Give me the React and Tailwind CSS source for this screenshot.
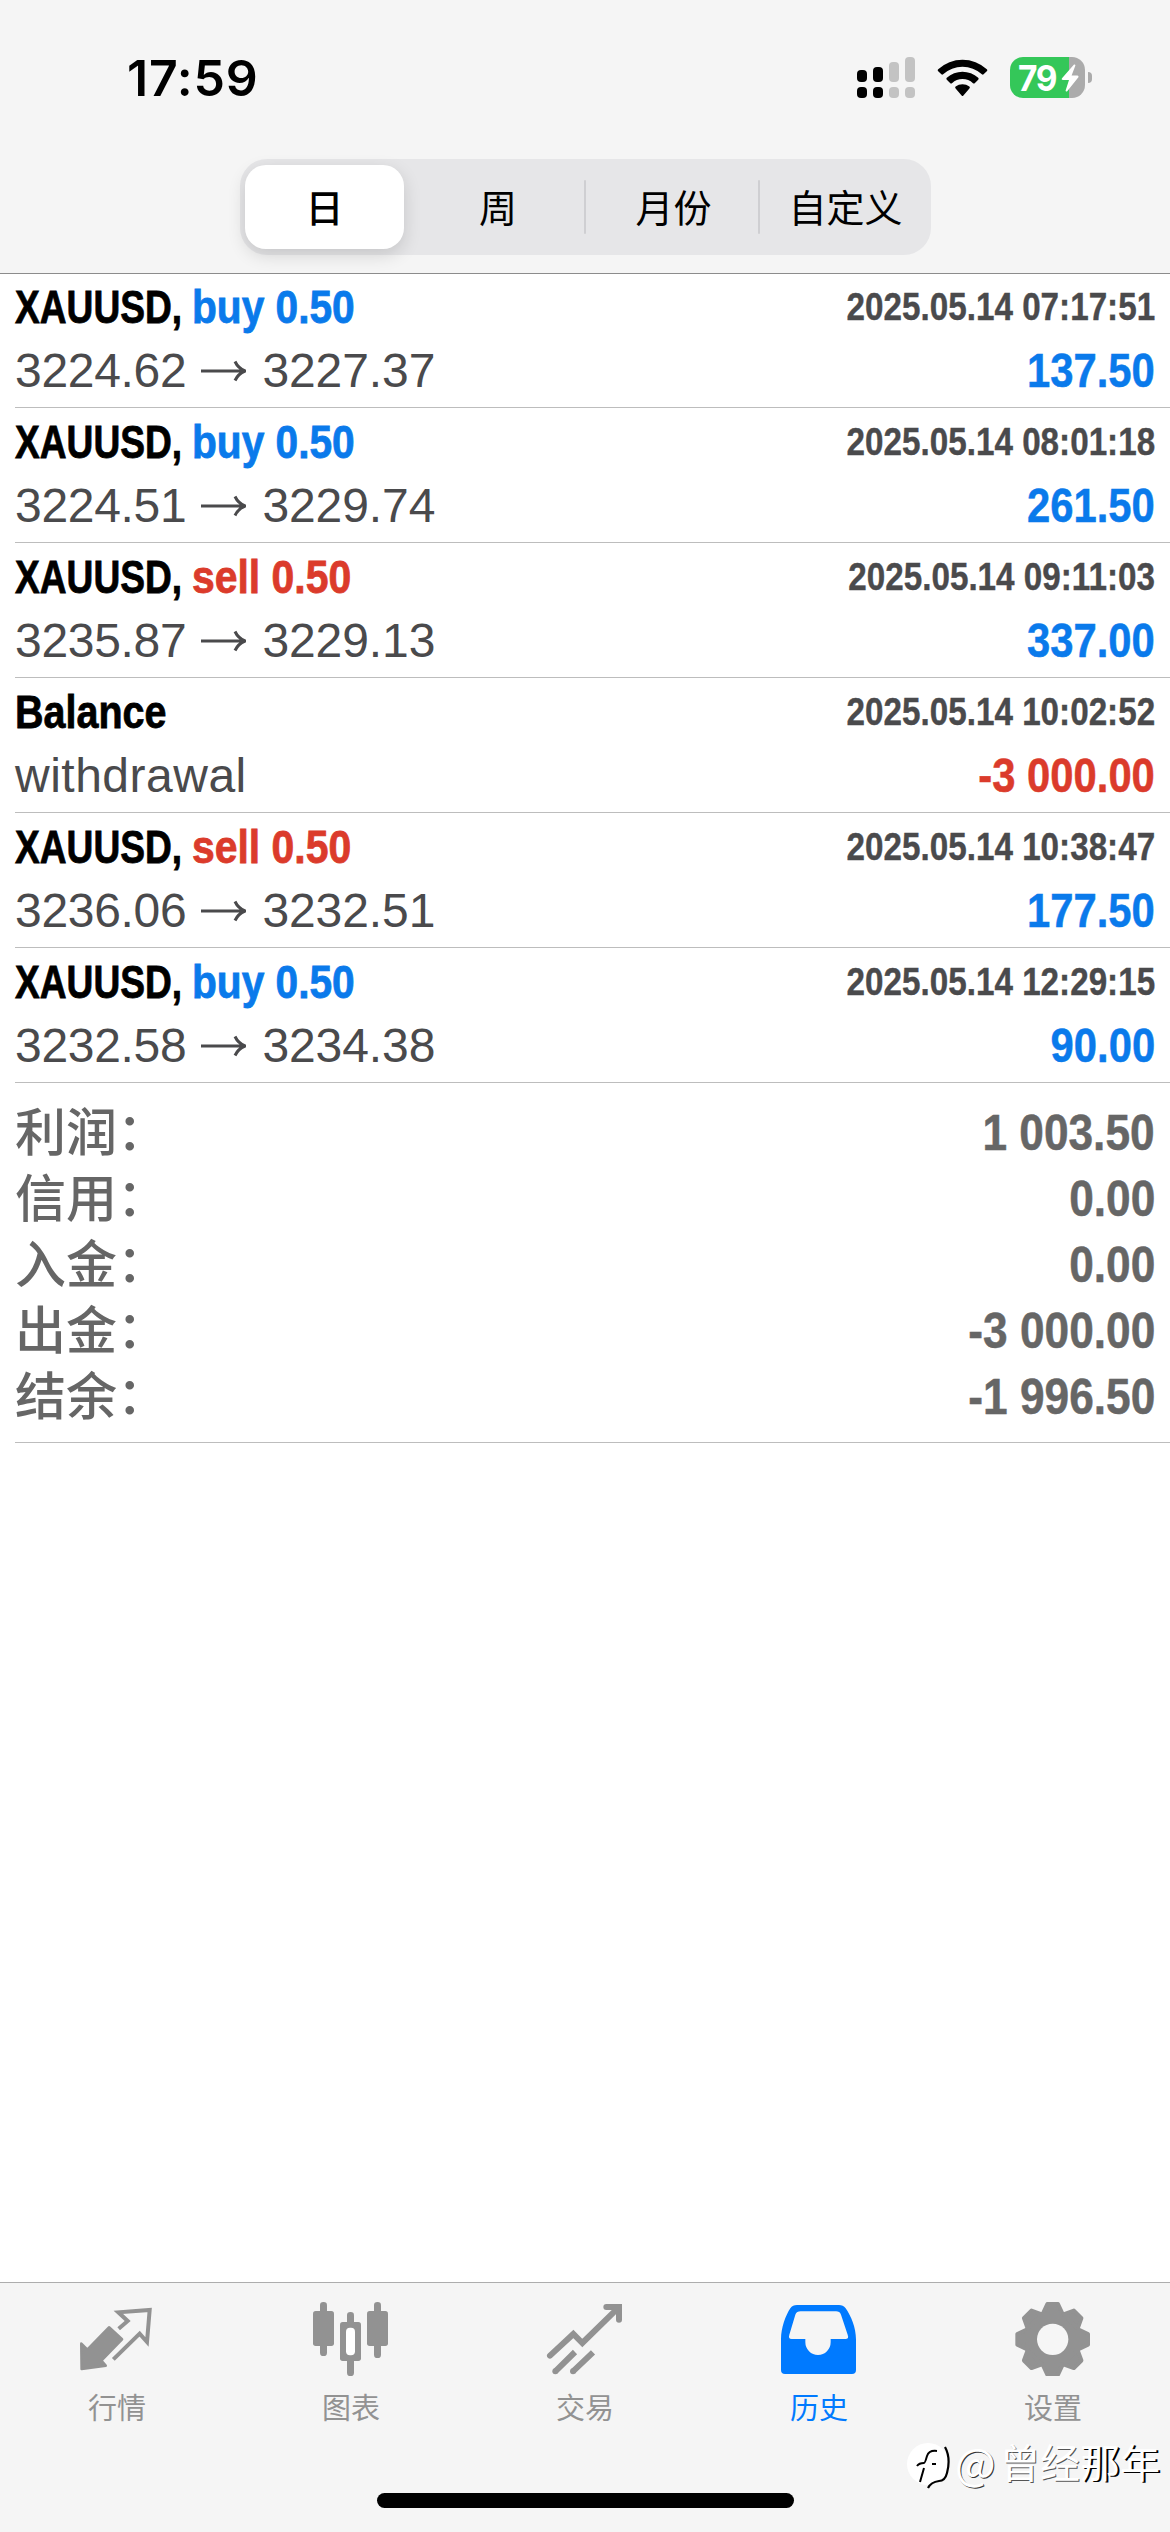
import clsx from 'clsx';

const deals = [
  { symbol: 'XAUUSD', side: 'buy', volume: '0.50', open: '3224.62', close: '3227.37', time: '2025.05.14 07:17:51', profit: '137.50' },
  { symbol: 'XAUUSD', side: 'buy', volume: '0.50', open: '3224.51', close: '3229.74', time: '2025.05.14 08:01:18', profit: '261.50' },
  { symbol: 'XAUUSD', side: 'sell', volume: '0.50', open: '3235.87', close: '3229.13', time: '2025.05.14 09:11:03', profit: '337.00' },
  { title: 'Balance', note: 'withdrawal', time: '2025.05.14 10:02:52', profit: '-3 000.00' },
  { symbol: 'XAUUSD', side: 'sell', volume: '0.50', open: '3236.06', close: '3232.51', time: '2025.05.14 10:38:47', profit: '177.50' },
  { symbol: 'XAUUSD', side: 'buy', volume: '0.50', open: '3232.58', close: '3234.38', time: '2025.05.14 12:29:15', profit: '90.00' },
];

const summary = [
  { label: '利润', value: '1 003.50' },
  { label: '信用', value: '0.00' },
  { label: '入金', value: '0.00' },
  { label: '出金', value: '-3 000.00' },
  { label: '结余', value: '-1 996.50' },
];

const periods = ['日', '周', '月份', '自定义'];

const StatusBar = () => (
  <div className="flex h-[146px] items-start justify-between pt-[50px] pl-[127px] pr-[78px]">
    <span className="font-[Inter,sans-serif] text-[50px] leading-[56px] font-semibold tracking-[0.8px] text-black">
      17:59
    </span>
    <div className="flex items-start pt-[7px]">
      <svg className="h-[42px] w-[60px]" viewBox="0 0 60 42">
        <g fill="#000">
          <rect x="0" y="13" width="10" height="12" rx="4" />
          <rect x="16" y="10" width="10" height="15" rx="4" />
          <rect x="0" y="30" width="10" height="11" rx="4" />
          <rect x="16" y="30" width="10" height="11" rx="4" />
        </g>
        <g fill="#c3c3c3">
          <rect x="32" y="5" width="10" height="20" rx="4" />
          <rect x="48" y="0" width="10" height="25" rx="4" />
          <rect x="32" y="30" width="10" height="11" rx="4" />
          <rect x="48" y="30" width="10" height="11" rx="4" />
        </g>
      </svg>
      <svg className="ml-5 h-[42px] w-[52px]" viewBox="0 0 52 42">
        <path d="M1.2 12.2A36 36 0 0 1 49.8 12.2Q50.8 13.2 49.8 14.2L46.6 17.3Q45.8 18.1 44.9 17.3A29 29 0 0 0 6.1 17.3Q5.2 18.1 4.4 17.3L1.2 14.2Q.2 13.2 1.2 12.2Z" />
        <path d="M9.8 20.8A23.5 23.5 0 0 1 41.2 20.8Q42.2 21.8 41.2 22.8L37.7 26.2Q36.9 27 36 26.2A15.5 15.5 0 0 0 15 26.2Q14.1 27 13.3 26.2L9.8 22.8Q8.8 21.8 9.8 20.8Z" />
        <path d="M18.6 29.6A11 11 0 0 1 32.4 29.6Q33.4 30.6 32.4 31.6L26.4 38.5Q25.5 39.5 24.6 38.5L18.6 31.6Q17.6 30.6 18.6 29.6Z" />
      </svg>
      <div className="ml-[21px] flex items-center">
        <div className="flex h-[41px] w-[75px] items-center rounded-[13px] bg-linear-to-r from-[#34c759] from-79% to-[#ababab] to-79% pl-2">
          <span className="w-[43px] origin-left scale-x-[0.93] font-[Inter,sans-serif] text-[36px] leading-none font-bold tracking-[-1.5px] text-white">
            79
          </span>
          <svg className="h-7 w-[18px]" viewBox="0 0 18 28" fill="#fff">
            <path d="M13 .5 1 14.3Q0 16 2 16H8L4.6 26.4Q4.6 28 6.2 27.2L17.4 13.2Q18 11.5 16.4 11.4H10.6L14.4 1.6Q14.4 0 13 .5Z" />
          </svg>
        </div>
        <div className="ml-[3px] h-[11px] w-1 rounded-r-full bg-[#ababab]" />
      </div>
    </div>
  </div>
);

const PeriodPicker = () => (
  <div className="mt-[13px] ml-[240px] grid h-24 w-[691px] grid-cols-[172px_174px_174px_171px] rounded-[27px] bg-[#e6e6e8] font-['Noto_Sans_CJK_SC',sans-serif] text-[38px] text-black">
    {periods.map((period, i) => (
      <div key={period} className="flex items-center">
        <div
          className={clsx(
            'flex h-[84px] flex-1 items-center justify-center pb-[3px] leading-none',
            i === 0 && 'ml-[5px] mr-2 rounded-[21px] bg-white font-medium shadow-[0_6px_18px_rgba(0,0,0,0.14)]',
            i === 2 && 'pl-[3px]'
          )}
        >
          {period}
        </div>
        {(i === 1 || i === 2) && <div className="h-[54px] w-[2px] rounded bg-[#cfcfd2]" />}
      </div>
    ))}
  </div>
);

const Arrow = () => (
  <svg className="ml-[15px] mr-4 h-[22px] w-[45px]" viewBox="0 0 45 22" fill="none" stroke="#4a4a4c" strokeWidth="3">
    <path d="M0 11H43M34 1.5Q37 8 44 11Q37 14 34 20.5" />
  </svg>
);

const DealRow = ({ deal }) => (
  <div className="h-[135px] border-b border-[#bdbdbd] pt-[2px] pr-[15px] text-[48px] leading-[64px] text-[#4a4a4c]">
    <div className="flex h-16 justify-between font-bold">
      <div className="flex text-[47px] [-webkit-text-stroke:0.8px]">
        {deal.symbol ? (
          <>
            <span className="w-[177px] origin-left scale-x-[0.79] whitespace-nowrap text-black">{deal.symbol},</span>
            <span
              className={clsx(
                'origin-left whitespace-nowrap',
                deal.side === 'buy' ? 'scale-x-[0.865] text-[#0a7aeb]' : 'scale-x-[0.87] text-[#db3b2b]'
              )}
            >
              {deal.side} {deal.volume}
            </span>
          </>
        ) : (
          <span className="origin-left scale-x-[0.84] text-black">{deal.title}</span>
        )}
      </div>
      <span className="origin-right scale-x-[0.852] text-[39px] whitespace-nowrap [-webkit-text-stroke:0.4px]">
        {deal.time}
      </span>
    </div>
    <div className="flex h-16 justify-between">
      <div className="flex items-center">
        {deal.note ? (
          <span className="tracking-[0.5px]">{deal.note}</span>
        ) : (
          <>
            <span className="tracking-[-0.3px]">{deal.open}</span>
            <Arrow />
            <span className="tracking-[-0.1px]">{deal.close}</span>
          </>
        )}
      </div>
      <span
        className={clsx(
          'origin-right scale-x-[0.87] font-bold whitespace-nowrap [-webkit-text-stroke:0.5px]',
          deal.profit.startsWith('-') ? 'text-[#db3b2b]' : 'text-[#0a7aeb]'
        )}
      >
        {deal.profit}
      </span>
    </div>
  </div>
);

const Summary = () => (
  <div className="h-[360px] border-b border-[#bdbdbd] pt-[17px] pr-[15px] leading-[66px] text-[#666]">
    {summary.map(({ label, value }) => (
      <div key={label} className="flex h-[66px] justify-between">
        <span className="-mt-1 flex font-['Noto_Sans_CJK_SC',sans-serif] text-[51px] font-medium">
          {label}
          <span className="-mt-px">：</span>
        </span>
        <span className="origin-right scale-x-[0.885] text-[50px] font-bold whitespace-nowrap [-webkit-text-stroke:0.5px]">
          {value}
        </span>
      </div>
    ))}
  </div>
);

const QuotesIcon = () => (
  <>
    <path
      d="M13 143 31 161 96 94 135 130 73 194 86 209 14 219Z"
      fill="currentColor"
      stroke="currentColor"
      strokeWidth="8"
      strokeLinejoin="round"
    />
    <path d="M125 98 152 75 124 49 218 42 210 138 188 113 109 190" fill="none" stroke="currentColor" strokeWidth="12" />
  </>
);

const ChartIcon = () => (
  <g fill="currentColor">
    <rect x="6" y="45" width="63" height="105" rx="8" />
    <rect x="27" y="18" width="21" height="162" rx="10" />
    <rect x="87" y="78" width="63" height="117" rx="8" />
    <rect x="108" y="48" width="21" height="192" rx="10" />
    <rect x="105" y="95" width="27" height="83" rx="12" fill="#fff" />
    <rect x="168" y="45" width="63" height="105" rx="8" />
    <rect x="189" y="18" width="21" height="168" rx="10" />
  </g>
);

const TradeIcon = () => (
  <g fill="none" stroke="currentColor" strokeWidth="18">
    <path d="M15 179 85 114 112 141 218 37M184 33H222V71" strokeLinecap="round" />
    <path d="M31 226 90 168M84 226 144 169" />
    <circle cx="31" cy="226" r="9" fill="currentColor" stroke="none" />
    <circle cx="84" cy="226" r="9" fill="currentColor" stroke="none" />
  </g>
);

const HistoryIcon = () => (
  <path
    fill="currentColor"
    fillRule="evenodd"
    d="M6 222V130C6 95 20 58 34 37Q41 27 54 27H180Q192 27 200 37C216 60 231 95 231 130V222Q231 234 219 234H18Q6 234 6 222ZM65 46Q53 46 49 56L31 116Q27 129 38 129H79V138A38 39 0 0 0 155 138V129H199Q211 129 206 116L186 56Q182 46 171 46Z"
  />
);

const SettingsIcon = () => (
  <>
    <g fill="currentColor" stroke="currentColor" strokeWidth="12" strokeLinejoin="round">
      <circle cx="119" cy="130" r="81" />
      {[0, 45, 90, 135, 180, 225, 270, 315].map((angle) => (
        <path key={angle} d="M89 54 103 24H135L149 54Z" transform={`rotate(${angle} 119 130)`} />
      ))}
    </g>
    <circle cx="119" cy="130" r="47" fill="#f6f6f6" />
  </>
);

const tabs = [
  { label: '行情', Icon: QuotesIcon },
  { label: '图表', Icon: ChartIcon },
  { label: '交易', Icon: TradeIcon },
  { label: '历史', Icon: HistoryIcon, active: true },
  { label: '设置', Icon: SettingsIcon },
];

const TabBar = () => (
  <nav className="relative h-[250px] border-t border-[#adadad] bg-[#f5f5f5]">
    <div className="grid grid-cols-5 pt-[13px]">
      {tabs.map(({ label, Icon, active }) => (
        <div key={label} className={clsx('flex flex-col items-center', active ? 'text-[#007aff]' : 'text-[#929292]')}>
          <svg className="size-20" viewBox="0 0 240 240">
            <Icon />
          </svg>
          <span className="mt-[10px] font-['Noto_Sans_CJK_SC',sans-serif] text-[29px] leading-10">{label}</span>
        </div>
      ))}
    </div>
    <div className="mx-auto mt-[67px] h-[15px] w-[417px] rounded-full bg-black" />

    {/* Author mark, floats over the bar */}
    <div className="absolute top-[148px] right-[10px] flex items-center font-['Noto_Sans_CJK_SC',sans-serif] text-[40px] leading-[58px] text-white">
      <svg className="mt-3 h-[48px] w-[44px]" viewBox="0 0 44 48" fill="none">
        <circle cx="21" cy="21" r="21" fill="#fff" />
        <path d="M38 4Q44 15 40 30Q38 38 32 38Q24 39 21 45" stroke="#000" strokeWidth="2.2" />
        <path d="M30 8Q22 7 20 13Q18 20 17 20Q12 20 10 23M17 25 13 39M25 21H29" stroke="#000" strokeWidth="2" />
      </svg>
      <span className="ml-1 w-[45px] text-[43px] [text-shadow:1px_1px_0_#333]">@</span>
      <span className="[text-shadow:1px_1px_0_#555]">曾经</span>
      <span className="[text-shadow:2px_1px_0_#000]">那年</span>
    </div>
  </nav>
);

const App = () => (
  <div className="flex h-[2532px] w-[1170px] flex-col overflow-hidden bg-white font-['Liberation_Sans',Arial,sans-serif]">
    <header className="h-[274px] border-b border-[#8c8c8c] bg-[#f5f5f5]">
      <StatusBar />
      <PeriodPicker />
    </header>
    <main className="-mt-px flex-1 pl-[15px]">
      {deals.map((deal) => (
        <DealRow key={deal.time} deal={deal} />
      ))}
      <Summary />
    </main>
    <TabBar />
  </div>
);

export default App;
